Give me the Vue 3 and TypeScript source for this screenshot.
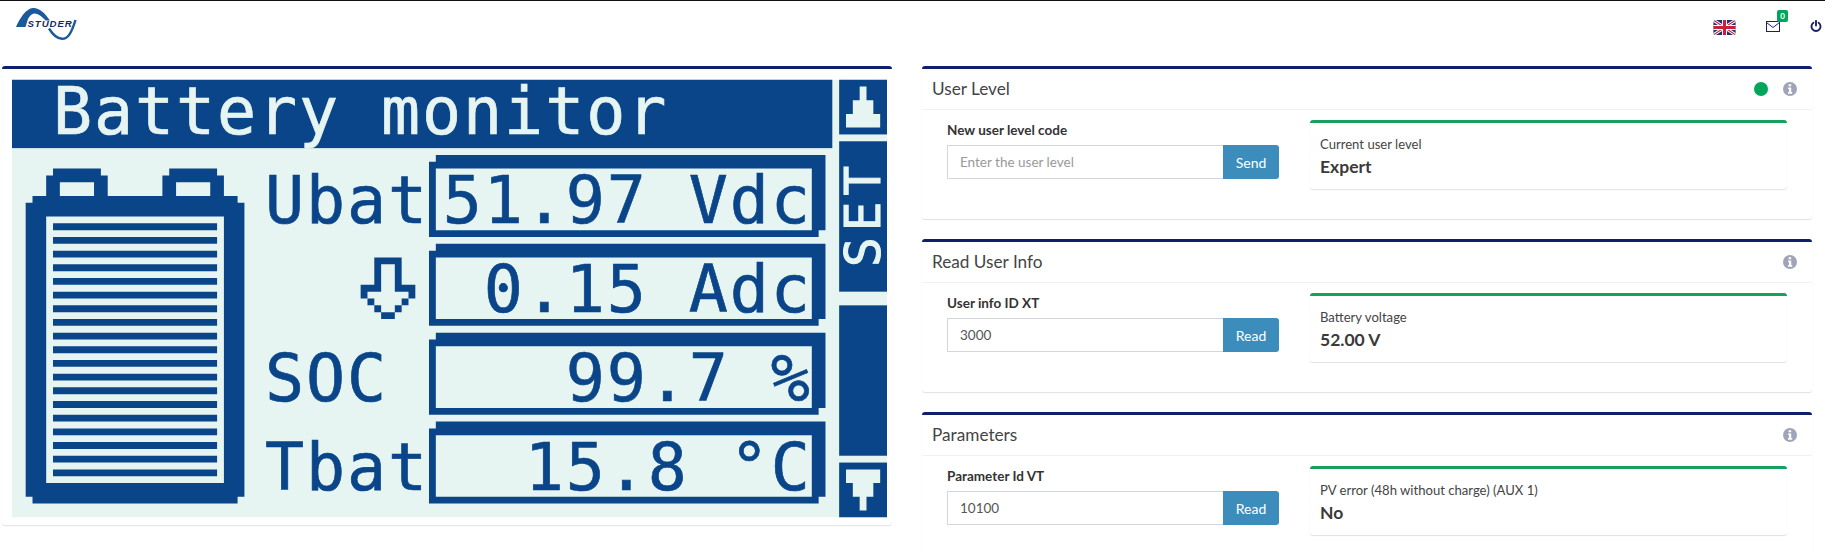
<script setup lang="ts">
interface Panel {
  title: string
  label: string
  value: string
  placeholder: string
  action: string
  resultLabel: string
  result: string
  status: boolean
}

const panels: Panel[] = [
  { title: 'User Level', label: 'New user level code', value: '', placeholder: 'Enter the user level', action: 'Send', resultLabel: 'Current user level', result: 'Expert', status: true },
  { title: 'Read User Info', label: 'User info ID XT', value: '3000', placeholder: '', action: 'Read', resultLabel: 'Battery voltage', result: '52.00 V', status: false },
  { title: 'Parameters', label: 'Parameter Id VT', value: '10100', placeholder: '', action: 'Read', resultLabel: 'PV error (48h without charge) (AUX 1)', result: 'No', status: false },
]

const boxes = [11, 24, 37, 50].map(r =>
  `M62 ${r}H119V${r + 11}H118V${r + 12}H61V${r + 1}H62ZM62 ${r + 2}V${r + 11}H117V${r + 2}Z`
).join('')

const stripes = Array.from({ length: 19 }, (_, i) => `M6 ${21 + i * 2}H30V${22 + i * 2}H6Z`).join('')

const readings = [
  { x: 63, y: 21, text: '51.97 Vdc' },
  { x: 69, y: 34, text: '0.15 Adc' },
  { x: 81, y: 47, text: '99.7 %' },
  { x: 75, y: 60, text: '15.8 °C' },
]
const captions = [
  { y: 21, text: 'Ubat' },
  { y: 47, text: 'SOC' },
  { y: 60, text: 'Tbat' },
]
</script>

<template>
  <div class="page">
    <header class="topbar">
      <svg class="logo" viewBox="0 0 62 33" aria-label="Studer">
        <path class="logo-arch" d="M0 19C4 10 10 .5 17 0 23-.3 29 5 34 12.500L29.500 12.500C26 8.500 22 5.500 18.500 5.500 15 6 12.500 9 11.500 12.500L9.500 19Z" />
        <text class="logo-text" x="11.500" y="19">STUDER</text>
        <path class="logo-wave" d="M33 20.500C37 27 41 30.500 46 30.800 52 31 55.500 25 59.500 12" />
      </svg>
      <div class="tools">
        <svg class="flag" viewBox="0 0 60 40">
          <defs>
            <clipPath id="flagclip"><rect width="60" height="40" rx="7" /></clipPath>
          </defs>
          <g clip-path="url(#flagclip)">
            <rect width="60" height="40" fill="#1f2f6e" />
            <path d="M0 0L60 40M60 0L0 40" stroke="#fff" stroke-width="8" />
            <path d="M0 0L60 40M60 0L0 40" stroke="#c8203a" stroke-width="3" />
            <path d="M30 0V40M0 20H60" stroke="#fff" stroke-width="13" />
            <path d="M30 0V40M0 20H60" stroke="#c8203a" stroke-width="8" />
          </g>
        </svg>
        <div class="mail">
          <svg viewBox="0 0 14 11" class="mail-icon">
            <rect x=".5" y=".5" width="13" height="10" fill="none" stroke="#1b1f6b" />
            <path d="M.5 1.500L7 6.500L13.500 1.500" fill="none" stroke="#1b1f6b" />
          </svg>
          <span class="badge">0</span>
        </div>
        <svg class="power" viewBox="0 0 14 14">
          <path d="M4 3.200A5.300 5.300 0 1 0 10 3.200" fill="none" stroke="#1b1f6b" stroke-width="2.200" stroke-linecap="round" />
          <path d="M7 1V6.500" stroke="#1b1f6b" stroke-width="2.200" stroke-linecap="round" />
        </svg>
      </div>
    </header>

    <main class="columns">
      <section class="card lcd-card">
        <svg class="lcd" viewBox="0 0 128 64">
          <rect width="128" height="64" class="lcd-bg" />
          <rect width="120" height="10" class="ink" />
          <text class="lcd-text inverse" x="6" y="8">Battery monitor</text>

          <path class="ink" fill-rule="evenodd" d="M6 13H13V14H14V17H22V14H23V13H30V14H31V17H33V18H34V61H33V62H3V61H2V18H3V17H5V14H6ZM7 15V17H12V15ZM24 15V17H29V15ZM5 20V59H31V20Z" />
          <path class="ink" :d="stripes" />

          <text v-for="c in captions" :key="c.text" class="lcd-text" x="37" :y="c.y">{{ c.text }}</text>
          <path class="ink" fill-rule="evenodd" d="M53 26H57V30H59V32H58V33H57V34H56V35H54V34H53V33H52V32H51V30H53ZM54 27V31H52V32H53V33H54V34H56V33H57V32H58V31H56V27Z" />

          <path class="ink" fill-rule="evenodd" :d="boxes" />
          <text v-for="r in readings" :key="r.text" class="lcd-text" :x="r.x" :y="r.y">{{ r.text }}</text>

          <rect x="121" width="7" height="8" class="ink" />
          <path class="lcd-fill" d="M124 1H125V3H126V5H127V7H122V5H123V3H124Z" />
          <rect x="121" y="9" width="7" height="22" class="ink" />
          <text class="set-text" transform="translate(127 27.400) rotate(-90)">SET</text>
          <rect x="121" y="33" width="7" height="22" class="ink" />
          <rect x="121" y="56" width="7" height="8" class="ink" />
          <path class="lcd-fill" d="M122 57H127V59H126V61H125V63H124V61H123V59H122Z" />
        </svg>
      </section>

      <div class="stack">
        <section v-for="p in panels" :key="p.title" class="card panel">
          <div class="panel-head">
            <h2>{{ p.title }}</h2>
            <span v-if="p.status" class="status-dot"></span>
            <svg class="info" viewBox="0 0 14 14">
              <circle cx="7" cy="7" r="7" fill="#9fa4b9" />
              <path d="M5.600 2.300H8.200V4.300H5.600ZM5 5.400H8.200V10H9.200V11.700H5V10H6V7.100H5Z" fill="#fff" />
            </svg>
          </div>
          <div class="panel-body">
            <form class="reader" @submit.prevent>
              <label>{{ p.label }}</label>
              <div class="input-group">
                <input type="text" :value="p.value" :placeholder="p.placeholder" />
                <button type="button">{{ p.action }}</button>
              </div>
            </form>
            <div class="result">
              <span class="result-label">{{ p.resultLabel }}</span>
              <strong>{{ p.result }}</strong>
            </div>
          </div>
        </section>
      </div>
    </main>
  </div>
</template>

<style>
html, body { margin: 0; background: #fff; overflow: hidden; }
</style>

<style scoped>
.page {
  width: 1825px;
  height: 551px;
  overflow: hidden;
  box-sizing: border-box;
  border-top: 1px solid #111;
  background: #fff;
  font-family: "Lato", "Noto Sans", sans-serif;
  color: #333;
}
.topbar {
  height: 65px;
  display: flex;
  justify-content: space-between;
  align-items: flex-start;
  padding: 7px 3px 0 16px;
  box-sizing: border-box;
}
.logo { width: 62px; height: 33px; display: block; overflow: visible; }
.logo-arch { fill: #1a5a9a; }
.logo-wave { fill: none; stroke: #1a5a9a; stroke-width: 2.400; }
.logo-text {
  font-family: "Liberation Sans", sans-serif;
  font-size: 9.700px;
  font-weight: 700;
  font-style: italic;
  letter-spacing: .9px;
  fill: #152a5f;
}
.tools {
  display: flex;
  align-items: center;
  height: 36px;
}
.flag { width: 23px; height: 15px; margin-top: 3px; }
.mail { position: relative; margin-left: 30px; margin-top: 1px; height: 11px; }
.mail-icon { display: block; width: 14px; height: 11px; }
.badge {
  position: absolute;
  left: 11px;
  top: -11px;
  width: 11px;
  height: 12px;
  border-radius: 2px;
  background: #00a65a;
  color: #fff;
  font-size: 8px;
  font-weight: 700;
  line-height: 12px;
  text-align: center;
}
.power { width: 12px; height: 12px; margin-left: 30px; }

.columns {
  display: grid;
  grid-template-columns: 890px 890px;
  column-gap: 30px;
  padding-left: 2px;
  align-items: start;
}
.card {
  border-top: 3px solid #0f1f6b;
  border-radius: 3px;
  background: #fff;
  box-shadow: 0 1px 1px rgba(0, 0, 0, .12);
}
.lcd-card { padding: 10px 5px 7px 10px; }
.lcd { display: block; width: 875px; height: 439px; overflow: visible; }
.lcd-bg, .lcd-fill { fill: #e6f5f1; }
.ink { fill: #0a4589; }
.lcd-text {
  font-family: "DejaVu Sans Mono", monospace;
  font-size: 9.500px;
  letter-spacing: .28px;
  fill: #0a4589;
  stroke: #0a4589;
  stroke-width: .1px;
}
.lcd-text.inverse { fill: #e6f5f1; stroke: #e6f5f1; }
.set-text {
  font-family: "DejaVu Sans Mono", monospace;
  font-size: 7.200px;
  letter-spacing: .9px;
  fill: #e6f5f1;
  stroke: #e6f5f1;
  stroke-width: .15px;
}

.stack { display: flex; flex-direction: column; gap: 20px; }
.panel { height: 153px; box-sizing: border-box; }
.panel-head {
  height: 40px;
  display: flex;
  align-items: center;
  padding: 0 15px 0 10px;
  border-bottom: 1px solid #f2f2f2;
}
.panel-head h2 {
  margin: -2px auto 0 0;
  font-size: 17.200px;
  font-weight: 400;
  color: #444;
}
.status-dot {
  width: 14px;
  height: 14px;
  border-radius: 50%;
  background: #00a65a;
  margin-right: 15px;
}
.info { width: 14px; height: 14px; }
.panel-body {
  display: grid;
  grid-template-columns: 332px 477px;
  column-gap: 31px;
  padding: 10px 0 0 25px;
}
.reader label {
  display: block;
  font-size: 13.500px;
  font-weight: 700;
  line-height: 17px;
  margin: 2px 0 6px;
  color: #333;
}
.input-group { display: flex; height: 34px; }
.input-group input {
  flex: 1;
  min-width: 0;
  box-sizing: border-box;
  border: 1px solid #d2d6de;
  border-right: 0;
  border-radius: 0;
  padding: 0 12px;
  font: 13.500px "Lato", "Noto Sans", sans-serif;
  color: #555;
  outline: none;
}
.input-group input::placeholder { color: #999; opacity: 1; }
.input-group button {
  width: 56px;
  border: 0;
  border-radius: 0 3px 3px 0;
  background: #3c8dbc;
  color: #fff;
  font: 14px "Lato", "Noto Sans", sans-serif;
}
.result {
  height: 69px;
  box-sizing: border-box;
  display: flex;
  flex-direction: column;
  padding: 13px 10px 0;
  border-top: 3px solid #17a05d;
  border-radius: 3px;
  box-shadow: 0 1px 1px rgba(0, 0, 0, .12);
}
.result-label { font-size: 13.100px; line-height: 17px; color: #444; }
.result strong { font-size: 17.500px; line-height: 24px; margin-top: 2px; color: #3a3a3a; }
</style>
